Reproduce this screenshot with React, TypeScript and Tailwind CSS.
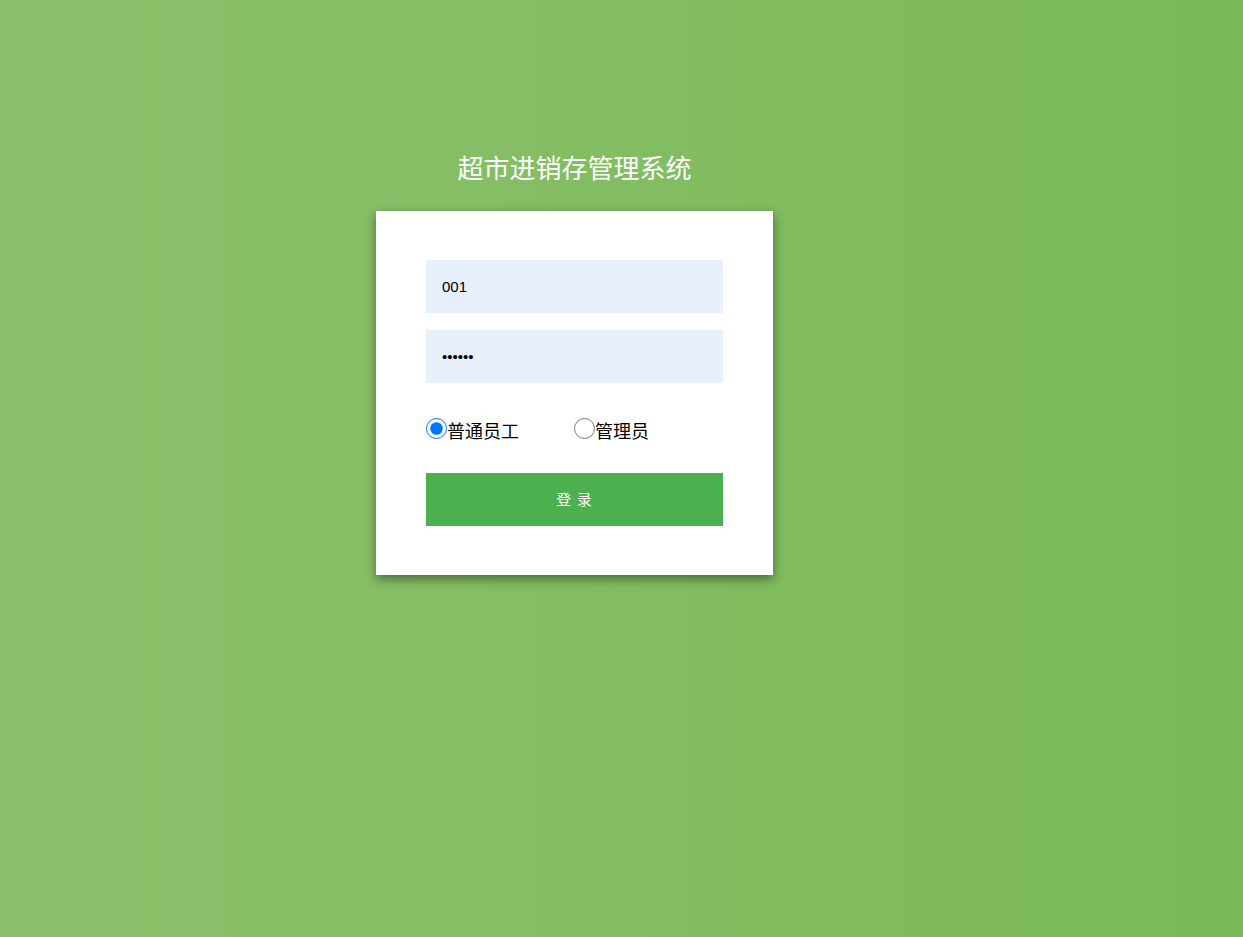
import { useState } from "react";

const font = { fontFamily: '"Microsoft YaHei", "Noto Sans CJK SC", "Liberation Sans", sans-serif' };

export default function App() {
  const [role, setRole] = useState("staff");
  const [user, setUser] = useState("001");
  const [pwd, setPwd] = useState("123456");

  return (
    <div
      className="min-h-[937px] w-full bg-gradient-to-r from-[#8bc16b] to-[#7bb958] pl-[376px] pt-[149px]"
      style={font}
    >
      <div className="w-[397px]">
        <h1 className="mb-[26px] text-center text-[26px] leading-[36px] text-white">超市进销存管理系统</h1>
        <form
          className="flex flex-col bg-white px-[50px] py-[49px] shadow-[0_4px_10px_rgba(0,0,0,0.45)]"
          onSubmit={(e) => e.preventDefault()}
        >
          <input
            value={user}
            onChange={(e) => setUser(e.target.value)}
            className="h-[53px] w-full bg-[#e8f0fe] px-4 text-[15px] text-black outline-none"
            style={{ fontFamily: '"Liberation Sans", Arial, sans-serif' }}
          />
          <input
            type="password"
            value={pwd}
            onChange={(e) => setPwd(e.target.value)}
            className="mt-[17px] h-[53px] w-full bg-[#e8f0fe] px-4 text-[15px] text-black outline-none"
            style={{ fontFamily: '"Liberation Sans", Arial, sans-serif' }}
          />
          <div className="mt-[33px] flex h-[24px] items-center text-[18px] leading-[24px] text-black">
            <label className="flex w-[148px] items-center">
              <input
                type="radio"
                name="role"
                checked={role === "staff"}
                onChange={() => setRole("staff")}
                className="m-0 h-[21px] w-[21px] accent-[#0075ff]"
              />
              <span className="mt-[3px]">普通员工</span>
            </label>
            <label className="flex items-center">
              <input
                type="radio"
                name="role"
                checked={role === "admin"}
                onChange={() => setRole("admin")}
                className="m-0 h-[21px] w-[21px] accent-[#0075ff]"
              />
              <span className="mt-[3px]">管理员</span>
            </label>
          </div>
          <button
            type="submit"
            className="mt-[33px] h-[53px] w-full bg-[#4caf50] text-[15px] tracking-[1px] text-white"
          >
            登 录
          </button>
        </form>
      </div>
    </div>
  );
}
